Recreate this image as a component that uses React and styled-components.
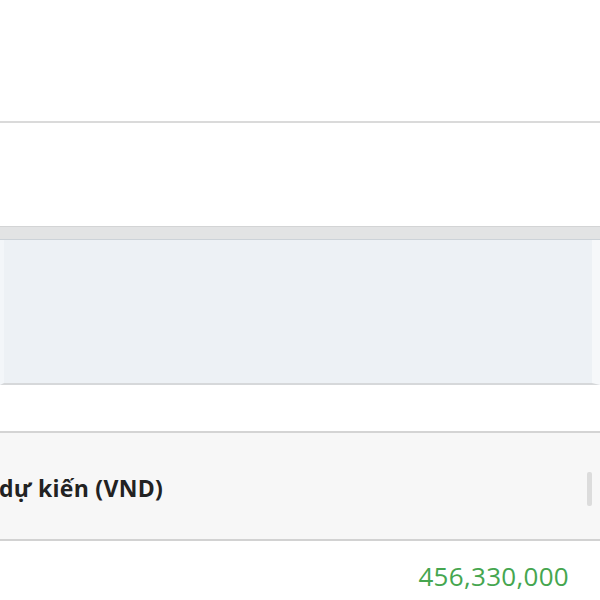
import React from 'react'
import styled, { createGlobalStyle } from 'styled-components'

const GlobalStyle = createGlobalStyle`
  html, body {
    margin: 0;
    padding: 0;
    background: #fff;
    font-family: 'Open Sans', 'Noto Sans', sans-serif;
  }
`

const Page = styled.div`
  width: 600px;
  height: 600px;
  overflow: hidden;
  display: flex;
  flex-direction: column;
  background: #fff;
`

const Blank = styled.div`
  height: ${(p) => p.h}px;
  background: #fff;
  border-bottom: ${(p) => (p.line ? '2px solid #dadada' : 'none')};
  flex-shrink: 0;
`

const Band = styled.div`
  height: 12px;
  background: #e2e3e4;
  border-top: 1px solid #d3d4d5;
  border-bottom: 1px solid #ccd2d8;
  flex-shrink: 0;
`

const Panel = styled.div`
  height: 143px;
  background: #edf1f5;
  border-left: 4px solid #f3f6f9;
  border-right: 8px solid #f6f8fa;
  border-bottom: 2px solid #d6d8da;
  flex-shrink: 0;
`

const Header = styled.div`
  height: 106px;
  background: #f7f7f7;
  border-top: 2px solid #d4d4d4;
  border-bottom: 2px solid #d2d2d2;
  display: flex;
  align-items: center;
  justify-content: space-between;
  flex-shrink: 0;
`

const HeaderText = styled.span`
  font-size: 23px;
  font-weight: 700;
  color: #222;
  margin-left: -1px;
  margin-top: 4px;
  white-space: nowrap;
  letter-spacing: 0.3px;
`

const Scroll = styled.div`
  width: 5px;
  height: 34px;
  margin-right: 8px;
  margin-top: 6px;
  background: #dcdcdc;
  border-radius: 2px;
`

const Footer = styled.div`
  flex: 1;
  display: flex;
  justify-content: flex-end;
  align-items: flex-start;
  padding: 17px 31px 0 0;
`

const Amount = styled.span`
  font-size: 26px;
  color: #45a64f;
  letter-spacing: 0.3px;
`

export default function App() {
  return (
    <Page>
      <GlobalStyle />
      <Blank h={121} line />
      <Blank h={103} />
      <Band />
      <Panel />
      <Blank h={46} />
      <Header>
        <HeaderText>dự kiến (VND)</HeaderText>
        <Scroll />
      </Header>
      <Footer>
        <Amount>456,330,000</Amount>
      </Footer>
    </Page>
  )
}
